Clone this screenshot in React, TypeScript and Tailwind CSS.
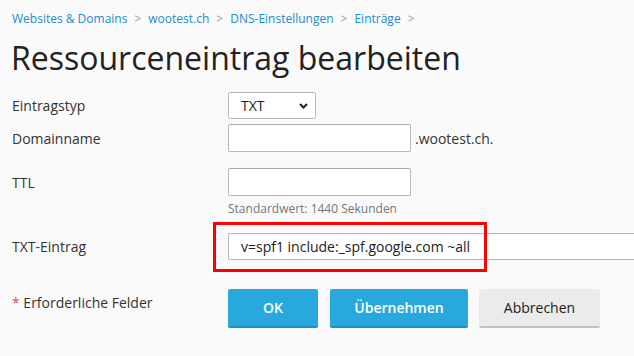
import React from "react";

function Chevron() {
  return (
    <svg width="9" height="6" viewBox="0 0 9 6" className="shrink-0">
      <path d="M1 1 L4.5 4.5 L8 1" fill="none" stroke="#222" strokeWidth="2" />
    </svg>
  );
}

function Sep() {
  return <span className="mx-[7px] text-[#9a9a9a]">&gt;</span>;
}

export default function App() {
  return (
    <div className="w-[634px] h-[356px] overflow-hidden bg-[#fafafa] font-['Open_Sans',sans-serif] text-[#333]">
      <div className="pl-3 pt-[10px] text-[12px] leading-[18px] text-[#1c8bcd] flex items-center">
        <span>Websites &amp; Domains</span>
        <Sep />
        <span>wootest.ch</span>
        <Sep />
        <span>DNS-Einstellungen</span>
        <Sep />
        <span>Einträge</span>
        <Sep />
      </div>
      <h1 className="pl-[11px] mt-[10px] text-[32px] leading-[40px] text-[#222] font-normal">
        Ressourceneintrag bearbeiten
      </h1>
      <div className="mt-[14px] pl-3 text-[14px] grid grid-cols-[216px_1fr]">
        {/* Eintragstyp */}
        <div className="h-[27px] flex items-center">Eintragstyp</div>
        <div>
          <div className="w-[88px] h-[27px] bg-white border border-[#b8b8b8] rounded-[2px] flex items-center justify-between pl-[12px] pr-[7px] text-[14px] text-[#222]">
            <span>TXT</span>
            <Chevron />
          </div>
        </div>
        {/* Domainname */}
        <div className="h-[28px] mt-[5px] flex items-center">Domainname</div>
        <div className="mt-[5px] flex items-center">
          <div className="w-[183px] h-[28px] bg-white border border-[#b8b8b8] border-t-[#a8a8a8] rounded-[2px]" />
          <span className="ml-[4px] text-[14px] text-[#333]">.wootest.ch.</span>
        </div>
        {/* TTL */}
        <div className="h-[28px] mt-[16px] flex items-center">TTL</div>
        <div className="mt-[16px]">
          <div className="w-[183px] h-[28px] bg-white border border-[#b8b8b8] border-t-[#a8a8a8] rounded-[2px]" />
          <div className="mt-[5px] text-[12px] leading-[16px] text-[#777]">Standardwert: 1440 Sekunden</div>
        </div>
        {/* TXT-Eintrag */}
        <div className="h-[27px] mt-[16px] flex items-center">TXT-Eintrag</div>
        <div className="mt-[16px] relative">
          <div className="h-[27px] w-[420px] bg-white border border-[#b8b8b8] border-r-0 rounded-l-[2px] flex items-center pl-[12px] text-[14px] text-[#222]">
            v=spf1 include:_spf.google.com ~all
          </div>
          <div className="absolute left-[-15px] top-[-11px] w-[274px] h-[50px] border-[3px] border-[#ff0000]" />
        </div>
        {/* buttons */}
        <div className="mt-[29px] pt-[3px]">
          <span className="text-[#d9534f]">*</span> Erforderliche Felder
        </div>
        <div className="mt-[29px] flex gap-[12px] text-[14px] font-semibold">
          <div className="w-[90px] h-[39px] rounded-[2px] bg-[#28a9de] border-b-2 border-[#1f8fbd] text-white flex items-center justify-center">OK</div>
          <div className="w-[138px] h-[39px] rounded-[2px] bg-[#28a9de] border-b-2 border-[#1f8fbd] text-white flex items-center justify-center">Übernehmen</div>
          <div className="ml-[-1px] w-[121px] h-[39px] rounded-[2px] bg-[#ebebeb] border-b-2 border-[#c2c2c2] text-[#222] font-normal flex items-center justify-center">Abbrechen</div>
        </div>
      </div>
    </div>
  );
}
